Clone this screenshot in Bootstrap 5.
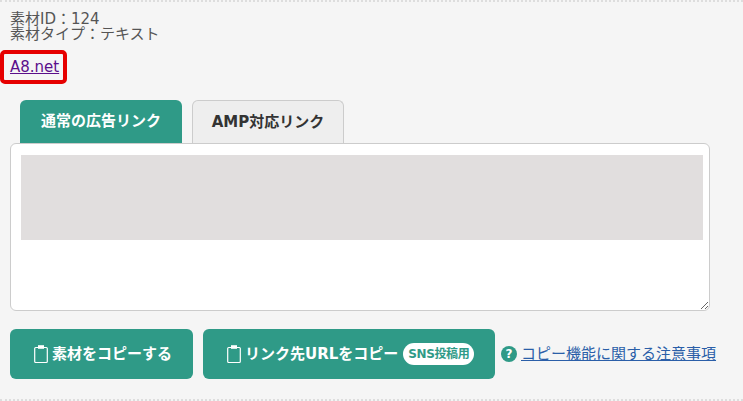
<!DOCTYPE html>
<html lang="ja">
<head>
<meta charset="utf-8">
<title>素材</title>
<link href="https://cdn.jsdelivr.net/npm/bootstrap@5.3.0/dist/css/bootstrap.min.css" rel="stylesheet">
<style>
html,body{height:401px;overflow:hidden}
body{background:#f5f5f5;font-family:"DejaVu Sans","Noto Sans CJK JP",sans-serif;color:#555;font-size:15px}
.sheet{height:401px;border-top:2px dotted #ddd;border-bottom:2px dotted #ddd;padding:10px 0 0 10px}
.meta{line-height:15px}
.a8box{display:inline-block;border:4px solid #e60000;border-radius:5px;margin:8px 0 0 -10px;padding:3px 4px 4px 6px;line-height:20px;height:34px;background:#f5f5f5}
.a8box a{color:#5b0f8b}
.tabrow{margin:16px 0 0 10px;gap:10px;height:43px}
.tabitem{height:43px;border-radius:6px 6px 0 0;font-weight:700;font-size:15px;display:flex;align-items:center;justify-content:center}
.tab-on{width:162px;background:#2f9a87;color:#fff}
.tab-off{width:152px;background:#eee;color:#333;border:1px solid #ccc;border-bottom:0}
.areawrap{position:relative;height:168px;width:700px}
.areawrap textarea{display:block;width:100%;height:168px;border:1px solid #ccc;border-radius:6px;background:#fff;box-shadow:none}
.graybox{position:absolute;left:11px;top:12px;right:7px;height:85px;background:#e1dede}
.actions{margin-top:18px;gap:10px}
.actbtn{height:50px;background:#2f9a87;color:#fff;border:0;border-radius:6px;font-weight:700;font-size:15px;display:flex;align-items:center;justify-content:flex-start;gap:3px;padding:0 0 0 23px;flex:none}
.actbtn:hover{background:#2f9a87;color:#fff}
.w1{width:183px}.w2{width:292px}
.snspill{background:#fff;color:#2f9a87;border-radius:11px;font-size:12px;line-height:22px;padding:0 5px;margin-left:2px;letter-spacing:-.4px}
.notelink{color:#2a5ea8;font-size:15px;white-space:nowrap}
.notewrap{gap:4px;margin-left:-4px}
.qmark{width:16px;height:16px;border-radius:50%;background:#2f9a87;color:#fff;font-size:12px;font-weight:700;line-height:16px;text-align:center;flex:none}
</style>
</head>
<body>
<div class="sheet">
  <div class="meta">素材ID：124<br>素材タイプ：テキスト</div>
  <div class="a8box"><a href="#">A8.net</a></div>
  <div class="d-flex tabrow">
    <div class="tabitem tab-on">通常の広告リンク</div>
    <div class="tabitem tab-off">AMP対応リンク</div>
  </div>
  <div class="areawrap">
    <textarea class="form-control" aria-label="広告リンク"></textarea>
    <div class="graybox"></div>
  </div>
  <div class="d-flex align-items-center actions">
    <button type="button" class="btn actbtn w1">
      <svg width="16" height="20" viewBox="0 0 16 20" fill="none" stroke="#fff" stroke-width="1.2"><rect x="1.7" y="3.5" width="12.6" height="15" rx="1"/><rect x="5" y="1.2" width="6" height="3.6" fill="#fff" stroke="none"/></svg>
      <span>素材をコピーする</span>
    </button>
    <button type="button" class="btn actbtn w2">
      <svg width="16" height="20" viewBox="0 0 16 20" fill="none" stroke="#fff" stroke-width="1.2"><rect x="1.7" y="3.5" width="12.6" height="15" rx="1"/><rect x="5" y="1.2" width="6" height="3.6" fill="#fff" stroke="none"/></svg>
      <span>リンク先URLをコピー</span><span class="snspill">SNS投稿用</span>
    </button>
    <div class="d-flex align-items-center notewrap">
      <span class="qmark">?</span><a class="notelink" href="#">コピー機能に関する注意事項</a>
    </div>
  </div>
</div>
<script src="https://cdn.jsdelivr.net/npm/bootstrap@5.3.0/dist/js/bootstrap.bundle.min.js"></script>
</body>
</html>
